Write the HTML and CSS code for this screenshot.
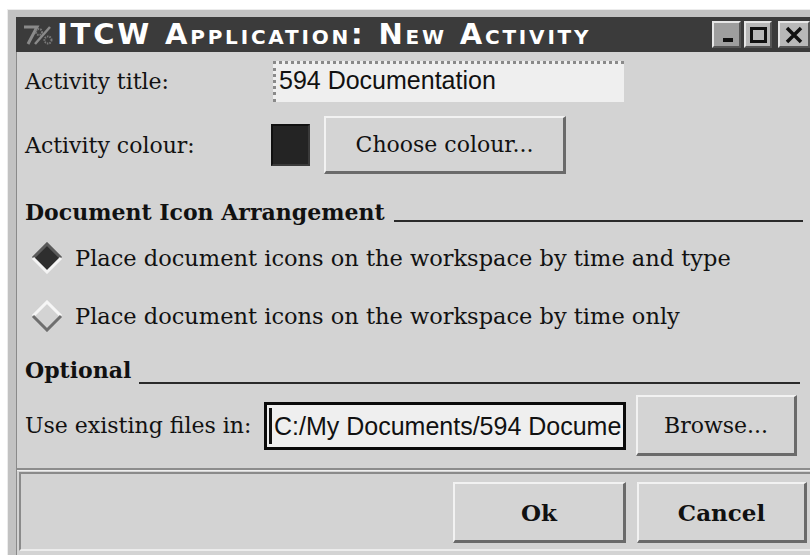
FILE: index.html
```html
<!DOCTYPE html>
<html>
<head>
<meta charset="utf-8">
<title>ITCW Application: New Activity</title>
<link rel="stylesheet" href="styles.css">
</head>
<body>
<div class="window">
  <div class="titlebar">
    <svg class="app-icon" width="34" height="22" viewBox="0 0 34 22">
      <path d="M2 3 H15 L6 20" fill="none" stroke="#8a8a8a" stroke-width="3"/>
      <path d="M13 20 L28 3" fill="none" stroke="#8a8a8a" stroke-width="2.5"/>
      <circle cx="17" cy="8" r="3" fill="none" stroke="#7a7a7a" stroke-width="2" stroke-dasharray="1.5 1"/>
      <circle cx="26" cy="16" r="3.5" fill="none" stroke="#7a7a7a" stroke-width="2" stroke-dasharray="1.5 1"/>
    </svg>
    <span class="title-text">ITCW Application: New Activity</span>
    <div class="wm-buttons">
      <div class="wm-btn wm-min"><span class="min-bar"></span></div>
      <div class="wm-btn wm-max"><span class="max-box"></span></div>
      <div class="wm-btn wm-close">
        <svg width="20" height="20" viewBox="0 0 20 20"><path d="M3 3 L17 17 M17 3 L3 17" stroke="#111" stroke-width="3.5"/></svg>
      </div>
    </div>
  </div>

  <div class="content">
    <div class="row row-title">
      <span class="label">Activity title:</span>
      <div class="entry entry-title">594 Documentation</div>
    </div>

    <div class="row row-colour">
      <span class="label">Activity colour:</span>
      <div class="swatch"></div>
      <div class="button btn-colour">Choose colour...</div>
    </div>

    <div class="section section-icons">
      <span class="section-name">Document Icon Arrangement</span>
      <span class="section-rule"></span>
    </div>

    <div class="radio radio-first">
      <svg class="diamond" width="32" height="32" viewBox="0 0 32 32">
        <path d="M16 2 L30 16 L16 30 L2 16 Z" fill="#2e2e2e"/>
        <path d="M2 16 L16 2 L30 16" fill="none" stroke="#5a5a5a" stroke-width="3"/>
        <path d="M2 16 L16 30 L30 16" fill="none" stroke="#f4f4f4" stroke-width="3"/>
      </svg>
      <span class="radio-text">Place document icons on the workspace by time and type</span>
    </div>

    <div class="radio radio-second">
      <svg class="diamond" width="32" height="32" viewBox="0 0 32 32">
        <path d="M16 2 L30 16 L16 30 L2 16 Z" fill="#d3d3d3"/>
        <path d="M2 16 L16 2 L30 16" fill="none" stroke="#f6f6f6" stroke-width="3"/>
        <path d="M2 16 L16 30 L30 16" fill="none" stroke="#6e6e6e" stroke-width="3"/>
      </svg>
      <span class="radio-text">Place document icons on the workspace by time only</span>
    </div>

    <div class="section section-optional">
      <span class="section-name">Optional</span>
      <span class="section-rule"></span>
    </div>

    <div class="row row-files">
      <span class="label">Use existing files in:</span>
      <div class="entry entry-path"><span class="cursor"></span>C:/My Documents/594 Docume</div>
      <div class="button btn-browse">Browse...</div>
    </div>

    <div class="separator"></div>

    <div class="actions">
      <div class="button btn-action btn-ok">Ok</div>
      <div class="button btn-action btn-cancel">Cancel</div>
    </div>
  </div>
</div>
</body>
</html>
```

FILE: styles.css
```css
html, body {
  margin: 0;
  padding: 0;
  background: #ffffff;
  overflow: hidden;
}

body {
  width: 810px;
  height: 555px;
}

/* outer window frame */
.window {
  margin: 9px 0 0 7px;
  width: 820px;
  height: 560px;
  box-sizing: border-box;
  padding: 7px 0 0 8px;
  background: #c2c2c2;
  border-top: 1px solid #ececec;
  border-left: 1px solid #ececec;
  display: flex;
  flex-direction: column;
}

.titlebar {
  height: 35px;
  background: #3b3b3b;
  display: flex;
  align-items: center;
  padding-left: 6px;
  flex-shrink: 0;
}

.app-icon {
  flex-shrink: 0;
}

.title-text {
  margin-left: 1px;
  color: #ffffff;
  font-family: "DejaVu Sans", sans-serif;
  font-weight: bold;
  font-variant: small-caps;
  font-size: 29px;
  letter-spacing: 2.8px;
  line-height: 1;
  white-space: nowrap;
}

.wm-buttons {
  margin-left: auto;
  display: flex;
  gap: 3px;
  margin-right: 17px;
}

.wm-btn {
  width: 29px;
  height: 27px;
  box-sizing: border-box;
  border-top: 2px solid #e6e6e6;
  border-left: 2px solid #e6e6e6;
  border-right: 2px solid #555;
  border-bottom: 2px solid #555;
  background: #b8b8b8;
  display: flex;
  align-items: center;
  justify-content: center;
  position: relative;
}

.wm-min {
  background: #9e9e9e;
}

.min-bar {
  position: absolute;
  left: 9px;
  bottom: 4px;
  width: 10px;
  height: 4px;
  background: #111;
}

.wm-max {
  width: 28px;
}

.max-box {
  width: 17px;
  height: 16px;
  border: 3px solid #111;
  box-sizing: border-box;
}

.wm-close {
  width: 32px;
  margin-left: 3px;
}

/* dialog body */
.content {
  flex: 1;
  background: #d3d3d3;
  border-left: 1px solid #8a8a8a;
  padding: 9px 0 0 8px;
  display: flex;
  flex-direction: column;
  font-family: "DejaVu Serif", serif;
  font-size: 22px;
  color: #111;
}

.row {
  display: flex;
  align-items: center;
}

.label {
  white-space: nowrap;
}

.row-title {
  height: 41px;
}

.row-title .label {
  width: 248px;
}

.entry {
  box-sizing: border-box;
  background: #efefef;
  font-family: "Liberation Sans", Arial, sans-serif;
  color: #111;
  white-space: nowrap;
  overflow: hidden;
}

.entry-title {
  width: 351px;
  height: 41px;
  padding: 1px 0 0 3px;
  font-size: 25px;
  line-height: 30px;
  border-top: 3px dotted #8a8a8a;
  border-left: 3px dotted #8a8a8a;
}

.row-colour {
  margin-top: 14px;
  height: 58px;
}

.row-colour .label {
  width: 246px;
}

.swatch {
  width: 39px;
  height: 42px;
  box-sizing: border-box;
  background: #242424;
  border: 2px solid #111;
  border-right-color: #3a3a3a;
  border-bottom-color: #3a3a3a;
}

.button {
  box-sizing: border-box;
  background: #d4d4d4;
  border-top: 2px solid #f2f2f2;
  border-left: 2px solid #f2f2f2;
  border-right: 3px solid #6a6a6a;
  border-bottom: 3px solid #6a6a6a;
  display: flex;
  align-items: center;
  justify-content: center;
  white-space: nowrap;
  font-family: "DejaVu Serif", serif;
}

.btn-colour {
  margin-left: 14px;
  width: 242px;
  height: 58px;
}

.section {
  display: flex;
  align-items: flex-end;
  height: 32px;
  padding-right: 24px;
}

.section-name {
  font-weight: bold;
  line-height: 28px;
  white-space: nowrap;
}

.section-rule {
  flex: 1;
  margin-left: 9px;
  border-bottom: 2px solid #2a2a2a;
  margin-bottom: 4px;
}

.section-icons {
  margin-top: 20px;
}

.radio {
  display: flex;
  align-items: center;
  height: 32px;
  padding-left: 6px;
}

.radio-text {
  margin-left: 12px;
  white-space: nowrap;
  font-size: 22.5px;
}

.radio-first {
  margin-top: 16px;
}

.radio-second {
  margin-top: 26px;
}

.section-optional {
  margin-top: 20px;
  padding-right: 27px;
}

.section-optional .section-rule {
  margin-left: 8px;
  margin-bottom: 0;
}

.row-files {
  margin-top: 11px;
  height: 61px;
}

.row-files .label {
  width: 239px;
}

.entry-path {
  width: 362px;
  height: 48px;
  border: 3px solid #0a0a0a;
  font-size: 25px;
  line-height: 42px;
  display: flex;
  align-items: center;
  padding-left: 2px;
}

.cursor {
  width: 3px;
  height: 36px;
  background: #111;
  margin-right: 2px;
  flex-shrink: 0;
}

.btn-browse {
  margin-left: 10px;
  width: 161px;
  height: 61px;
}

.separator {
  margin-top: 12px;
  height: 0;
  border-top: 2px solid #8c8c8c;
  border-bottom: 1px solid #efefef;
  margin-left: -8px;
}

.actions {
  height: 79px;
  box-sizing: border-box;
  margin-left: -6px;
  margin-top: 1px;
  border-top: 2px solid #8a8a8a;
  border-left: 2px solid #8a8a8a;
  border-bottom: 2px solid #ececec;
  display: flex;
  justify-content: flex-end;
  align-items: flex-start;
  padding-top: 8px;
  padding-right: 20px;
  gap: 11px;
}

.btn-action {
  height: 61px;
  font-weight: bold;
  font-size: 23px;
}

.btn-ok {
  width: 173px;
}

.btn-cancel {
  width: 170px;
}
```
